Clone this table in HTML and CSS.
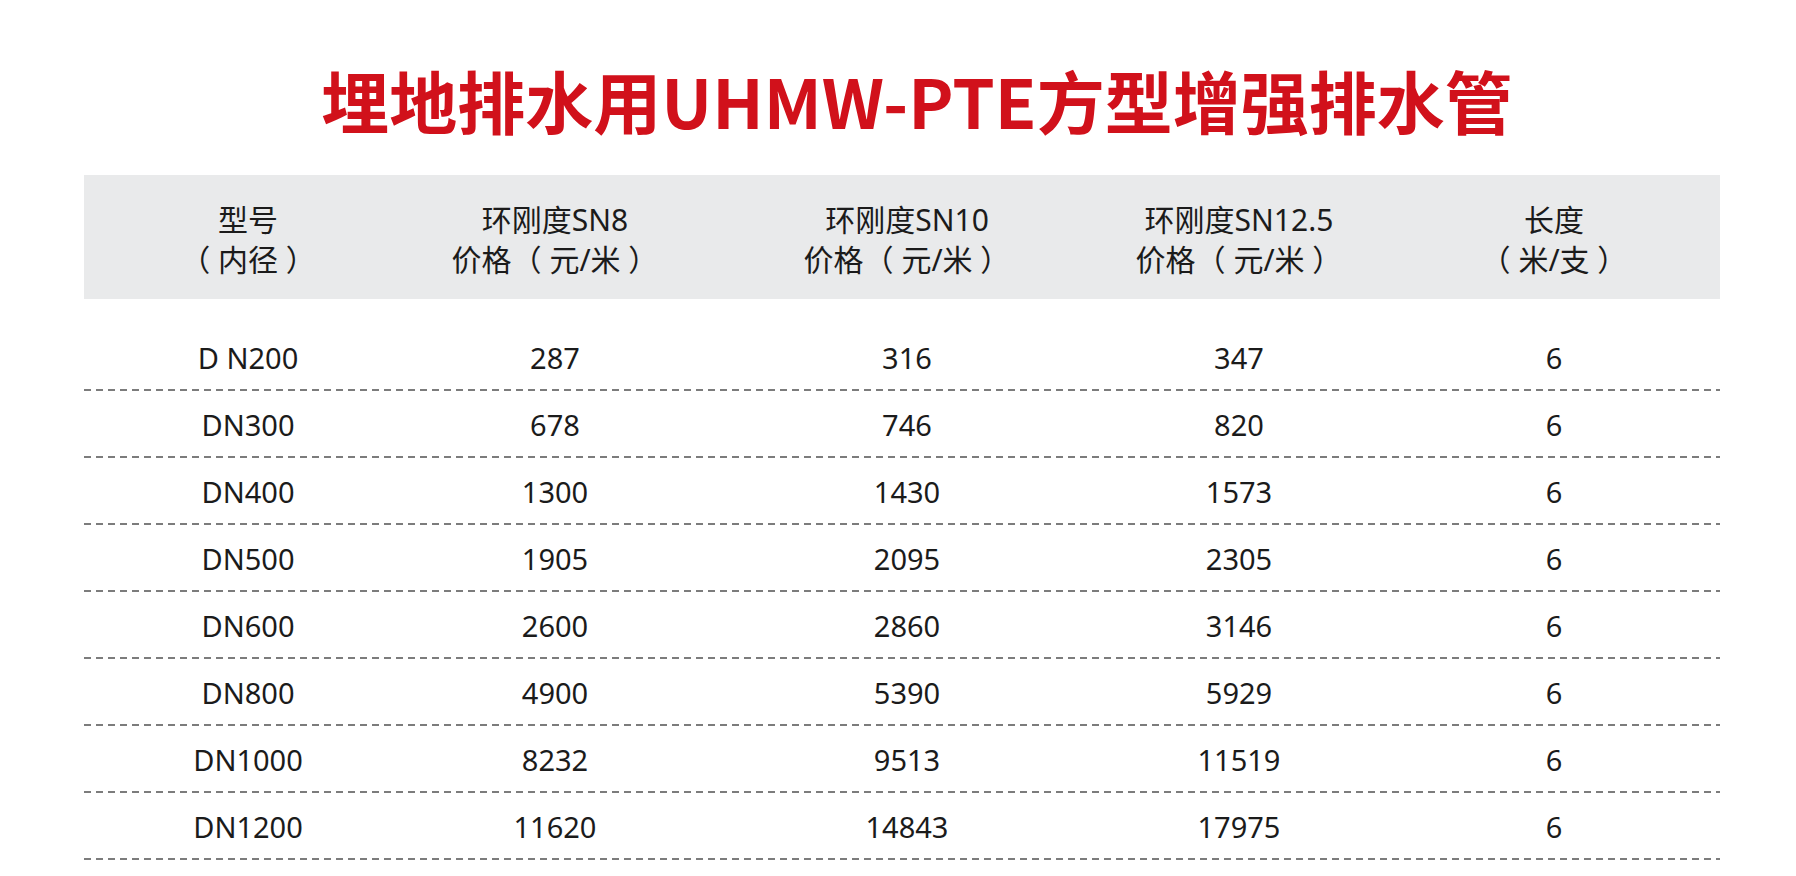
FILE: index.html
```html
<!DOCTYPE html>
<html lang="zh-CN">
<head>
<meta charset="utf-8">
<title>埋地排水用UHMW-PTE方型增强排水管</title>
<link rel="stylesheet" href="styles.css">
</head>
<body>
<div class="page">
  <h1 class="title">埋地排水用UHMW-PTE方型增强排水管</h1>
  <div class="table">
    <div class="head">
      <div class="cell c1">型号<br>（ 内径 ）</div>
      <div class="cell c2">环刚度SN8<br>价格（ 元/米 ）</div>
      <div class="cell c3">环刚度SN10<br>价格（ 元/米 ）</div>
      <div class="cell c4">环刚度SN12.5<br>价格（ 元/米 ）</div>
      <div class="cell c5">长度<br>（ 米/支 ）</div>
    </div>
    <div class="body">
      <div class="row"><div class="cell c1">D N200</div><div class="cell c2">287</div><div class="cell c3">316</div><div class="cell c4">347</div><div class="cell c5">6</div></div>
      <div class="row"><div class="cell c1">DN300</div><div class="cell c2">678</div><div class="cell c3">746</div><div class="cell c4">820</div><div class="cell c5">6</div></div>
      <div class="row"><div class="cell c1">DN400</div><div class="cell c2">1300</div><div class="cell c3">1430</div><div class="cell c4">1573</div><div class="cell c5">6</div></div>
      <div class="row"><div class="cell c1">DN500</div><div class="cell c2">1905</div><div class="cell c3">2095</div><div class="cell c4">2305</div><div class="cell c5">6</div></div>
      <div class="row"><div class="cell c1">DN600</div><div class="cell c2">2600</div><div class="cell c3">2860</div><div class="cell c4">3146</div><div class="cell c5">6</div></div>
      <div class="row"><div class="cell c1">DN800</div><div class="cell c2">4900</div><div class="cell c3">5390</div><div class="cell c4">5929</div><div class="cell c5">6</div></div>
      <div class="row"><div class="cell c1">DN1000</div><div class="cell c2">8232</div><div class="cell c3">9513</div><div class="cell c4">11519</div><div class="cell c5">6</div></div>
      <div class="row"><div class="cell c1">DN1200</div><div class="cell c2">11620</div><div class="cell c3">14843</div><div class="cell c4">17975</div><div class="cell c5">6</div></div>
    </div>
  </div>
</div>
</body>
</html>
```
FILE: styles.css
```css
html, body {
  margin: 0;
  padding: 0;
  background: #ffffff;
}
.page {
  width: 1796px;
  height: 876px;
  overflow: hidden;
  font-family: "Noto Sans", "Noto Sans CJK SC", sans-serif;
  color: #1b1b1b;
}
.title {
  margin: 60px 0 35px 0;
  padding-left: 38px;
  text-align: center;
  font-family: "Noto Sans CJK SC", sans-serif;
  font-weight: 700;
  font-size: 68px;
  line-height: 80px;
  color: #d1111b;
  letter-spacing: 0;
}
.table {
  margin-left: 84px;
  width: 1636px;
}
.head, .row {
  display: grid;
  grid-template-columns: 328px 286px 418px 246px 1fr;
  align-items: center;
}
.head {
  height: 124px;
  background: #e9eaeb;
  font-family: "Noto Sans", "Noto Sans CJK SC", sans-serif;
  font-size: 30px;
  line-height: 40px;
  padding-top: 5px;
  box-sizing: border-box;
}
.cell {
  text-align: center;
  white-space: nowrap;
}
.c5 {
  padding-left: 26px;
}
.body {
  padding-top: 25px;
}
.row {
  height: 67px;
  box-sizing: border-box;
  font-size: 29px;
  line-height: 40px;
  background-image: linear-gradient(to right, #7c7c7c 7px, transparent 7px);
  background-size: 12px 2px;
  background-repeat: repeat-x;
  background-position: left bottom;
}
```
